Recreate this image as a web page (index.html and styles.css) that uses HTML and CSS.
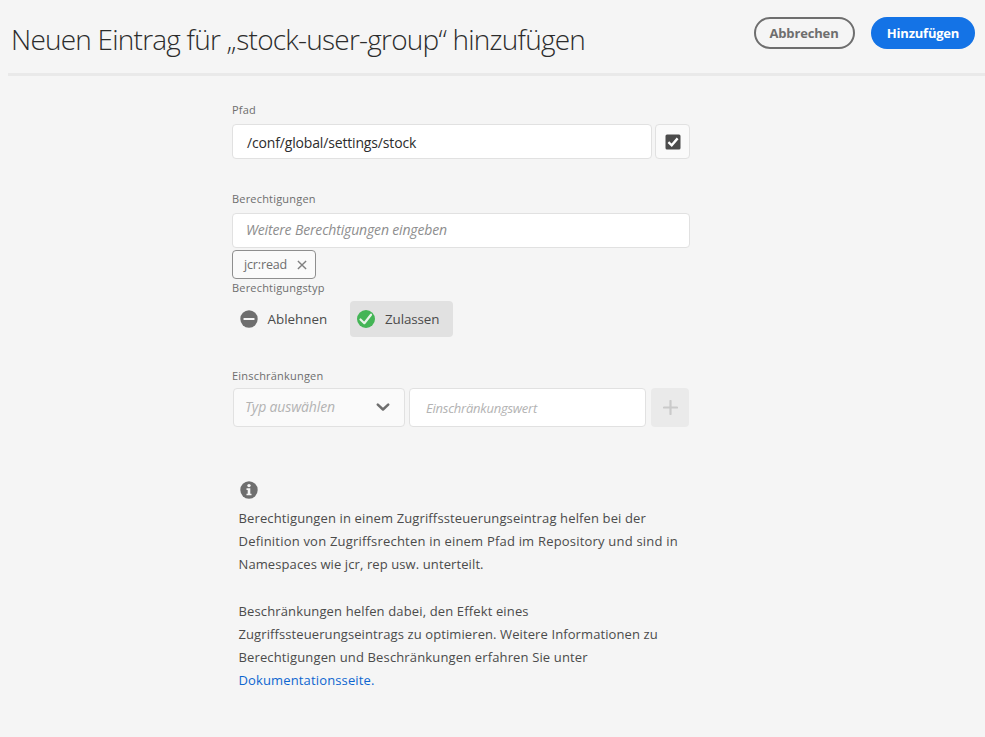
FILE: index.html
```html
<!DOCTYPE html>
<html lang="de">
<head>
<meta charset="utf-8">
<title>Neuen Eintrag hinzufügen</title>
<link rel="stylesheet" href="styles.css">
</head>
<body>
<header class="header">
  <h1 class="title">Neuen Eintrag für „stock-user-group“ hinzufügen</h1>
  <div class="actions">
    <button class="btn btn-secondary">Abbrechen</button>
    <button class="btn btn-primary">Hinzufügen</button>
  </div>
</header>
<main class="form">
  <label class="label">Pfad</label>
  <div class="path-row">
    <div class="field path">/conf/global/settings/stock</div>
    <button class="picker" aria-label="Pfad">
      <svg width="16" height="16" viewBox="0 0 16 16"><rect x=".5" y=".5" width="15" height="15" rx="1.5" fill="#4b4b4b"/><path d="M3.4 8.2 6.7 11.3 12.6 4.4" fill="none" stroke="#fff" stroke-width="2.4"/></svg>
    </button>
  </div>

  <label class="label label-permissions">Berechtigungen</label>
  <div class="field permissions">Weitere Berechtigungen eingeben</div>
  <div class="tag"><span>jcr:read</span>
    <svg width="10" height="10" viewBox="0 0 10 10"><path d="M.9.9 9.1 9.1M9.1.9.9 9.1" stroke="#808080" stroke-width="1.4"/></svg>
  </div>
  <label class="label label-type">Berechtigungstyp</label>
  <div class="toggle">
    <button class="option deny">
      <svg width="18" height="18" viewBox="0 0 18 18"><circle cx="9" cy="9" r="8.7" fill="#6e6e6e"/><rect x="3.5" y="8" width="11" height="2" rx=".5" fill="#f5f5f5"/></svg>
      <span>Ablehnen</span>
    </button>
    <button class="option allow">
      <svg width="18" height="18" viewBox="0 0 18 18"><circle cx="9" cy="9" r="9" fill="#44b556"/><path d="M3.5 9.5 7.3 13.2 14 4.7" fill="none" stroke="#e8f3e9" stroke-width="2.2" stroke-linecap="round" stroke-linejoin="round"/></svg>
      <span>Zulassen</span>
    </button>
  </div>

  <label class="label label-restrictions">Einschränkungen</label>
  <div class="restriction-row">
    <div class="field select"><span>Typ auswählen</span>
      <svg width="14" height="9" viewBox="0 0 14 9"><path d="M1.8 1.6 7 6.5 12.2 1.6" fill="none" stroke="#6e6e6e" stroke-width="2.5" stroke-linecap="round" stroke-linejoin="round"/></svg>
    </div>
    <div class="field value">Einschränkungswert</div>
    <button class="add" aria-label="Hinzufügen">
      <svg width="15" height="15" viewBox="0 0 15 15"><path d="M7.5 1V14M1 7.5H14" stroke="#cacaca" stroke-width="2.2" stroke-linecap="round"/></svg>
    </button>
  </div>

  <section class="info">
    <svg class="info-icon" width="18" height="18" viewBox="0 0 18 18"><circle cx="9" cy="9" r="8.7" fill="#6e6e6e"/><circle cx="9" cy="4.6" r="1.7" fill="#f5f5f5"/><path d="M6.5 7.3H10.3V12.7H11.5V14.3H6.5V12.7H7.7V8.9H6.5Z" fill="#f5f5f5"/></svg>
    <p><span class="l1">Berechtigungen in einem Zugriffssteuerungseintrag helfen bei der</span><br><span class="l2">Definition von Zugriffsrechten in einem Pfad im Repository und sind in</span><br><span class="l3">Namespaces wie jcr, rep usw. unterteilt.</span></p>
    <p>Beschränkungen helfen dabei, den Effekt eines<br><span class="l3">Zugriffssteuerungseintrags zu optimieren. Weitere Informationen zu</span><br>Berechtigungen und Beschränkungen erfahren Sie unter<br><a class="link">Dokumentationsseite.</a></p>
  </section>
</main>
</body>
</html>
```
FILE: styles.css
```css
* { box-sizing: border-box; }
body {
  margin: 0;
  height: 737px;
  background: #f5f5f5;
  font-family: "Open Sans", "Noto Sans", sans-serif;
  color: #4b4b4b;
  overflow: hidden;
}
svg { display: block; flex: none; }
button { font-family: inherit; margin: 0; padding: 0; border: 0; color: inherit; }

.header {
  display: flex;
  justify-content: space-between;
  height: 76px;
  margin-left: 8px;
  padding: 17px 10px 0 3px;
  border-bottom: 3px solid #e9e9e9;
}
.title {
  margin: 2px 0 0;
  font-size: 28px;
  font-weight: 300;
  line-height: 40px;
  letter-spacing: -0.78px;
  color: #2c2c2c;
  white-space: nowrap;
}
.actions { display: flex; gap: 16px; }
.btn {
  height: 32px;
  border-radius: 16px;
  font-size: 13px;
  font-weight: 700;
  line-height: 28px;
}
.btn-secondary { width: 101px; padding-right: 1px; border: 2px solid #6e6e6e; background: transparent; color: #6e6e6e; letter-spacing: -0.15px; }
.btn-primary { width: 104px; background: #1473e6; color: #fff; letter-spacing: -0.22px; }

.form { width: 458px; margin: 26px 0 0 232px; }
.label { display: block; height: 16px; font-size: 11px; line-height: 16px; letter-spacing: 0.19px; color: #6e6e6e; }
.field { background: #fff; border: 1px solid #e1e1e1; border-radius: 4px; white-space: nowrap; }

.path-row { display: flex; gap: 3px; margin-top: 6px; }
.path { width: 420px; height: 35px; padding-left: 14px; font-size: 14px; line-height: 35px; letter-spacing: -0.16px; color: #2c2c2c; }
.picker { display: grid; place-items: center; width: 35px; height: 35px; background: #fafafa; border: 1px solid #e1e1e1; border-radius: 4px; }

.label-permissions { margin-top: 32px; }
.permissions { height: 35px; margin-top: 6px; padding-left: 13px; font-size: 14px; font-style: italic; line-height: 32px; letter-spacing: -0.16px; color: #8e8e8e; }
.tag {
  display: flex;
  align-items: center;
  justify-content: space-between;
  width: 84px;
  height: 29px;
  margin-top: 2px;
  padding: 0 8px 0 11px;
  border: 1px solid #8e8e8e;
  border-radius: 4px;
  background: #fafafa;
  font-size: 12.5px;
  letter-spacing: -0.15px;
  color: #6e6e6e;
}
.label-type { margin-top: 1px; }
.toggle { display: flex; gap: 8px; margin-top: 5px; }
.option { display: flex; align-items: center; gap: 10px; height: 36px; border-radius: 4px; background: transparent; font-size: 13.4px; }
.deny { width: 110px; padding-left: 7.5px; }
.allow { width: 103px; padding-left: 7px; background: #e1e1e1; letter-spacing: -0.1px; }

.label-restrictions { margin-top: 31px; letter-spacing: 0.2px; }
.restriction-row { display: flex; margin: 4px 0 0 1px; height: 39px; }
.select { display: flex; align-items: center; justify-content: space-between; width: 172px; padding: 0 14px 0 11px; background: #fafafa; font-size: 14px; font-style: italic; letter-spacing: -0.14px; color: #b3b3b3; }
.select span { margin-bottom: 2px; }
.value { width: 237px; margin-left: 4px; padding-left: 16px; font-size: 13px; font-style: italic; line-height: 38px; letter-spacing: -0.24px; color: #b3b3b3; }
.add { display: grid; place-items: center; width: 38px; margin-left: 5px; border-radius: 4px; background: #eaeaea; }

.info { margin: 54px 0 0 6px; font-size: 13px; line-height: 23.2px; letter-spacing: 0.14px; white-space: nowrap; }
.info-icon { margin-left: 1.5px; }
.info p { margin: 8px 0 0 0.5px; }
.info p + p { margin-top: 23px; }
.l1 { letter-spacing: 0.13px; }
.l2 { letter-spacing: 0.2px; }
.l3 { letter-spacing: 0.1px; }
.link { color: #0d66d0; }
```
